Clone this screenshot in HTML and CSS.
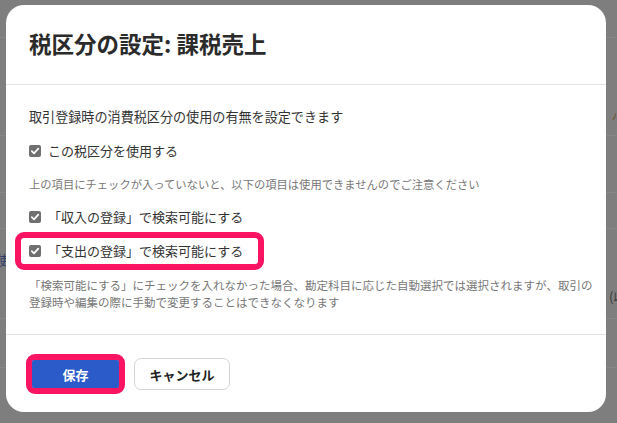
FILE: index.html
```html
<!DOCTYPE html>
<html lang="ja">
<head>
<meta charset="utf-8">
<title>税区分の設定</title>
<link rel="stylesheet" href="styles.css">
</head>
<body>
<div class="backdrop">
  <span class="bg-text bg-left">使</span>
  <span class="bg-text bg-right">(収</span>
  <span class="bg-text bg-right-top">ハ</span>
</div>
<div class="modal">
  <header class="modal-header">
    <h1 class="modal-title">税区分の設定: 課税売上</h1>
  </header>
  <section class="modal-body">
    <p class="desc">取引登録時の消費税区分の使用の有無を設定できます</p>
    <label class="check-row row-use">
      <span class="checkbox"><svg width="12" height="12" viewBox="0 0 12 12"><rect width="12" height="12" rx="2" fill="#707070"/><path d="M2.8 6.2 L5 8.4 L9.3 3.6" fill="none" stroke="#fff" stroke-width="1.7" stroke-linecap="round" stroke-linejoin="round"/></svg></span>
      <span class="label">この税区分を使用する</span>
    </label>
    <p class="note note-1">上の項目にチェックが入っていないと、以下の項目は使用できませんのでご注意ください</p>
    <label class="check-row row-income">
      <span class="checkbox"><svg width="12" height="12" viewBox="0 0 12 12"><rect width="12" height="12" rx="2" fill="#707070"/><path d="M2.8 6.2 L5 8.4 L9.3 3.6" fill="none" stroke="#fff" stroke-width="1.7" stroke-linecap="round" stroke-linejoin="round"/></svg></span>
      <span class="label">「収入の登録」で検索可能にする</span>
    </label>
    <div class="highlight highlight-row">
      <label class="check-row">
        <span class="checkbox"><svg width="12" height="12" viewBox="0 0 12 12"><rect width="12" height="12" rx="2" fill="#707070"/><path d="M2.8 6.2 L5 8.4 L9.3 3.6" fill="none" stroke="#fff" stroke-width="1.7" stroke-linecap="round" stroke-linejoin="round"/></svg></span>
        <span class="label">「支出の登録」で検索可能にする</span>
      </label>
    </div>
    <p class="note note-2">「検索可能にする」にチェックを入れなかった場合、勘定科目に応じた自動選択では選択されますが、取引の<br>登録時や編集の際に手動で変更することはできなくなります</p>
  </section>
  <footer class="modal-footer">
    <div class="highlight highlight-btn">
      <button class="btn btn-primary" type="button">保存</button>
    </div>
    <button class="btn btn-secondary" type="button">キャンセル</button>
  </footer>
</div>
</body>
</html>
```

FILE: styles.css
```css
html, body {
  margin: 0;
  padding: 0;
}

body {
  width: 617px;
  height: 423px;
  overflow: hidden;
  position: relative;
  font-family: "Noto Sans CJK JP", "Noto Sans", sans-serif;
  color: #333;
  background-color: #7e7e7e;
  background-image:
    linear-gradient(#878787, #878787),
    linear-gradient(#878787, #878787),
    linear-gradient(#878787, #878787),
    linear-gradient(#878787, #878787),
    linear-gradient(#878787, #878787),
    linear-gradient(#878787, #878787);
  background-repeat: no-repeat;
  background-size: 100% 1px;
  background-position: 0 37px, 0 135px, 0 192px, 0 228px, 0 318px, 0 367px;
}

.backdrop {
  position: absolute;
  inset: 0;
}

.bg-text {
  position: absolute;
  font-size: 13px;
  line-height: 14px;
}

.bg-left {
  left: -4px;
  top: 253px;
  color: #2f3b66;
}

.bg-right {
  left: 609px;
  top: 290px;
  color: #3a3a3a;
}

.bg-right-top {
  left: 612px;
  top: 109px;
  color: #6a4f2a;
  font-size: 10px;
}

.modal {
  position: absolute;
  left: 6px;
  top: 5px;
  width: 600px;
  background: #fff;
  border-radius: 18px;
  overflow: hidden;
}

.modal-header {
  padding: 22px 23px 24px;
  border-bottom: 1px solid #e3e3e3;
}

.modal-title {
  margin: 0;
  font-size: 22.5px;
  line-height: 33px;
  font-weight: 700;
  color: #2b2b2b;
}

.modal-body {
  padding: 22px 11px 23px 23px;
  display: flex;
  flex-direction: column;
  align-items: flex-start;
  border-bottom: 1px solid #e3e3e3;
}

.desc {
  margin: 0;
  font-size: 13.1px;
  line-height: 20px;
  color: #333;
}

.check-row {
  display: flex;
  align-items: center;
  gap: 7px;
  height: 20px;
}

.checkbox {
  display: flex;
  width: 12px;
  height: 12px;
}

.label {
  font-size: 13px;
  line-height: 20px;
  color: #333;
}

.row-use {
  margin-top: 14px;
}

.note {
  margin: 0;
  line-height: 17px;
  color: #777;
  white-space: nowrap;
}

.note-1 {
  margin-top: 15px;
  font-size: 11.3px;
}

.row-income {
  margin-top: 14px;
}

.highlight {
  border: 6px solid #fb1462;
  border-radius: 9px;
}

.highlight-row {
  margin-top: 5px;
  margin-left: -14px;
  padding: 3px 15px 3px 8px;
}

.note-2 {
  margin-top: 7px;
  font-size: 11.5px;
}

.modal-footer {
  display: flex;
  align-items: center;
  gap: 9px;
  padding: 19px 20px 18px;
}

.highlight-btn {
  display: flex;
}

.btn {
  font-family: "Noto Sans CJK JP", "Noto Sans", sans-serif;
  font-size: 13px;
  font-weight: 700;
  margin: 0;
  cursor: pointer;
}

.btn-primary {
  width: 87px;
  height: 28px;
  border: none;
  border-radius: 2px;
  background: #2b5bc9;
  color: #fff;
}

.btn-secondary {
  width: 96px;
  height: 32px;
  border: 1px solid #d4d4d4;
  border-radius: 7px;
  background: #fff;
  color: #222;
}
```
